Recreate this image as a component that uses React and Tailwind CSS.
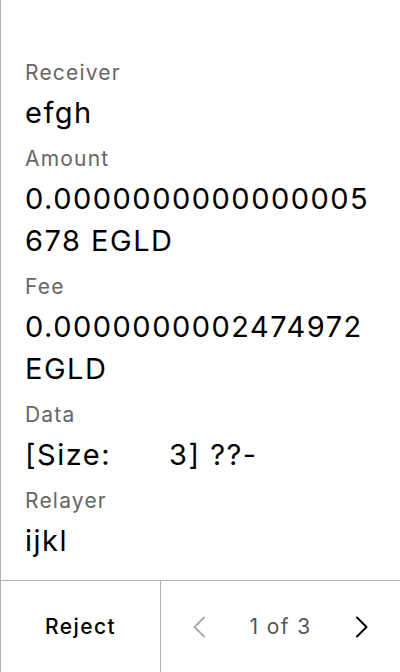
import React from 'react';

const fields = [
    { label: 'Receiver', value: 'efgh' },
    { label: 'Amount', value: '0.0000000000000005678 EGLD' },
    { label: 'Fee', value: '0.0000000002474972 EGLD' },
    { label: 'Data', value: '[Size:      3] ??-' },
    { label: 'Relayer', value: 'ijkl' },
];

function Chevron({ dir = 'right', className = '' }) {
    return (
        <svg width="14" height="22" viewBox="0 0 14 22" fill="none" className={className}>
            {dir === 'left'
                ? <path d="M12 1.5 L2.5 11 L12 20.5" stroke="currentColor" strokeWidth="2" strokeLinecap="round" strokeLinejoin="round" />
                : <path d="M2 1.5 L11.5 11 L2 20.5" stroke="currentColor" strokeWidth="2" strokeLinecap="round" strokeLinejoin="round" />}
        </svg>
    );
}

export default function App() {
    return (
        <div className="w-[400px] h-[672px] flex flex-col bg-white border-l border-[#b0b0b0] text-black" style={{ fontFamily: 'Inter, "Noto Sans", sans-serif' }}>
            <div className="flex-1 flex flex-col gap-[11px] pt-[59px] pl-[24px] pr-[20px]">
                {fields.map((f) => (
                    <div key={f.label} className="flex flex-col">
                        <div className="text-[21px] leading-[28px] tracking-[1.2px] text-[#666] mb-[5px]">{f.label}</div>
                        <div className="text-[29px] leading-[42px] tracking-[1.5px] break-words whitespace-pre-wrap">{f.value}</div>
                    </div>
                ))}
            </div>
            <div className="h-[92px] flex border-t border-[#b0b0b0]">
                <div className="w-[160px] flex items-center justify-center border-r border-[#b0b0b0] text-[21px] tracking-[1.4px] font-medium">
                    Reject
                </div>
                <div className="flex-1 flex items-center justify-between px-[31px]">
                    <Chevron dir="left" className="text-[#aaa]" />
                    <span className="text-[21px] tracking-[1.4px] text-[#555]">1 of 3</span>
                    <Chevron dir="right" className="text-black" />
                </div>
            </div>
        </div>
    );
}
